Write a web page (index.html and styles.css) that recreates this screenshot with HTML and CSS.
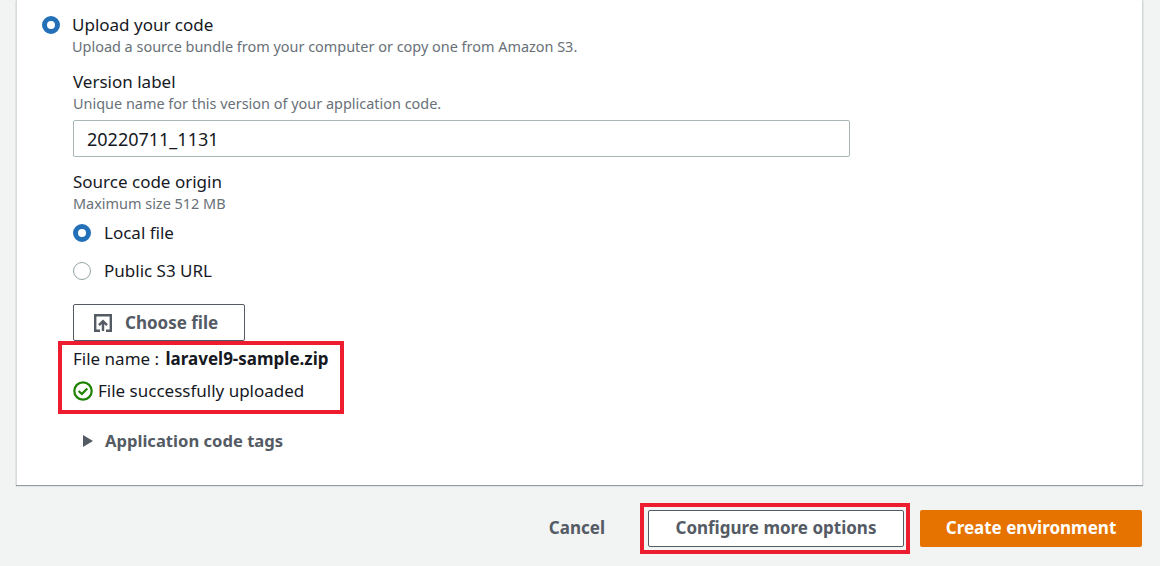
FILE: index.html
```html
<!DOCTYPE html>
<html lang="en">
<head>
<meta charset="utf-8">
<title>Upload your code</title>
<link rel="stylesheet" href="styles.css">
</head>
<body>
<main class="page">
  <section class="card">
    <div class="radio-row top-radio">
      <span class="radio checked big"></span>
      <div>
        <div class="label">Upload your code</div>
        <div class="hint">Upload a source bundle from your computer or copy one from Amazon S3.</div>
      </div>
    </div>
    <div class="nested">
      <div class="label">Version label</div>
      <div class="hint">Unique name for this version of your application code.</div>
      <input class="text-input" type="text" value="20220711_1131">
      <div class="label origin">Source code origin</div>
      <div class="hint">Maximum size 512 MB</div>
      <div class="radio-row local"><span class="radio checked"></span><span class="label">Local file</span></div>
      <div class="radio-row public"><span class="radio"></span><span class="label">Public S3 URL</span></div>
      <button class="choose" type="button">
        <svg class="upload-icon" width="18" height="18" viewBox="0 0 18 18" fill="none" stroke="#545b64" stroke-width="2.4"><path d="M6 16.8H1.2V1.2h15.6v15.6H12"/><path d="M9 17V7.5M5 11.2 9 7.2l4 4"/></svg>
        <span>Choose file</span>
      </button>
      <div class="file-info">
        <div class="file-name">File name : <strong>laravel9-sample.zip</strong></div>
        <div class="file-status">
          <svg width="20" height="20" viewBox="0 0 20 20" fill="none" stroke="#1d8102" stroke-width="2.2"><circle cx="10" cy="10" r="8.7"/><path d="M5.6 10 8.9 13l5.4-5.6"/></svg>
          <span>File successfully uploaded</span>
        </div>
        <span class="highlight highlight-file"></span>
      </div>
      <div class="tags"><span class="caret"></span><span>Application code tags</span></div>
    </div>
  </section>
  <footer class="actions">
    <button class="btn-link" type="button">Cancel</button>
    <span class="configure-wrap">
      <button class="btn-normal" type="button">Configure more options</button>
      <span class="highlight highlight-btn"></span>
    </span>
    <button class="btn-primary" type="button">Create environment</button>
  </footer>
</main>
</body>
</html>
```
FILE: styles.css
```css
* { box-sizing: border-box; }
html, body { margin: 0; height: 566px; overflow: hidden; }
body { background: #f2f3f3; color: #16191f; font-family: "Noto Sans", "Open Sans", sans-serif; font-size: 17px; }
.page { padding: 0 17px 0 16px; }
.card { background: #fff; height: 485px; padding: 15px 24px 0 25px; border-left: 1px solid #d5dbdb; border-right: 1px solid #d5dbdb; box-shadow: 0 1px 1px 0 rgba(0,28,36,.4); }
.radio-row { display: flex; align-items: flex-start; }
.top-radio { gap: 12px; }
.radio { width: 18px; height: 18px; flex: none; border-radius: 50%; border: 1.5px solid #95a5a6; background: #fff; }
.radio.checked { border: 5px solid #2470b8; }
.top-radio .radio { margin-top: 1px; }
.label { font-size: 17px; line-height: 20px; }
.hint { font-size: 14.45px; line-height: 18px; margin-top: 3px; color: #687078; }
.nested { padding-left: 31px; margin-top: 16px; }
.text-input { display: block; width: 777px; height: 37px; margin-top: 7px; padding: 0 13px; border: 1px solid #aab7b8; border-radius: 2px; font: inherit; font-size: 18px; color: #16191f; background: #fff; }
.origin { margin-top: 15px; }
.local, .public { gap: 13px; align-items: center; height: 20px; }
.local { margin-top: 10px; }
.public { margin-top: 18px; }
.choose { display: flex; align-items: center; gap: 13px; width: 172px; height: 37px; margin-top: 23px; padding: 0 0 0 20px; border: 1px solid #545b64; border-radius: 2px; background: #fff; color: #545b64; font: inherit; font-weight: 700; }
.file-info { position: relative; margin-top: 8px; }
.file-name { line-height: 20px; }
.file-name strong { font-weight: 700; margin-left: 2px; }
.file-status { display: flex; align-items: center; gap: 5px; margin-top: 12px; line-height: 20px; }
.tags { display: flex; align-items: center; gap: 12px; margin: 30px 0 0 10px; font-size: 16.6px; font-weight: 700; color: #545b64; line-height: 20px; }
.caret { width: 0; height: 0; border-left: 10px solid #545b64; border-top: 6.5px solid transparent; border-bottom: 6.5px solid transparent; }
.highlight { position: absolute; border: 4px solid #ed1c2e; pointer-events: none; }
.highlight-file { left: -15px; top: -8px; width: 286px; height: 73px; }
.actions { display: flex; align-items: center; justify-content: flex-end; margin-top: 25px; padding-right: 1px; }
.actions button { height: 37px; padding-bottom: 3px; border-radius: 2px; font: inherit; font-weight: 700; }
.btn-link { border: 0; background: none; color: #545b64; padding: 0; margin-right: 43px; }
.configure-wrap { position: relative; display: block; height: 37px; margin-right: 16px; }
.btn-normal { display: block; width: 256px; border: 1px solid #545b64; background: #fff; color: #545b64; }
.btn-primary { width: 222px; border: 0; background: #e67300; color: #fff; }
.highlight-btn { left: -8px; top: -7px; width: 270px; height: 51px; }
```
